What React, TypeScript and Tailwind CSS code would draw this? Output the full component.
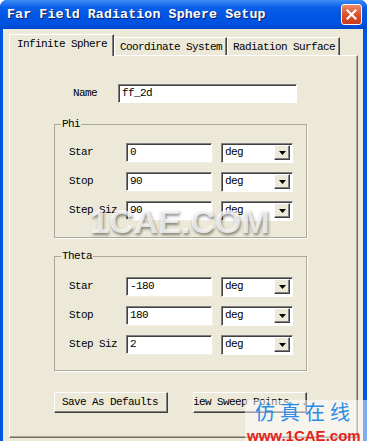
import React from "react";

type RowProps = {
  label: string;
  value: string;
};

function Field({ label, value }: RowProps) {
  return (
    <div className="flex items-center h-[19px] pl-[14px]">
      <span className="w-[57px] shrink-0">{label}</span>
      <div className="w-[86px] h-[19px] bg-white border border-t-[#808080] border-l-[#808080] border-r-white border-b-white shadow-[inset_1px_1px_0_#404040,1px_1px_0_#F1EFE2] flex items-center pl-[3px] text-black">
        {value}
      </div>
      <div className="ml-[9px] w-[72px] h-[20px] bg-white border border-t-[#808080] border-l-[#808080] border-r-white border-b-white shadow-[inset_1px_1px_0_#404040] flex items-center justify-between pl-[3px] pr-[2px]">
        <span>deg</span>
        <span className="w-[16px] h-[15px] bg-[#ECE9D8] border border-t-white border-l-white border-r-[#404040] border-b-[#404040] shadow-[inset_-1px_-1px_0_#808080] flex items-center justify-center">
          <svg width="7" height="4" viewBox="0 0 7 4">
            <path d="M0 0h7L3.5 4z" fill="#000" />
          </svg>
        </span>
      </div>
    </div>
  );
}

type GroupProps = {
  title: string;
  rows: RowProps[];
  className: string;
};

function Group({ title, rows, className }: GroupProps) {
  return (
    <fieldset
      className={`ml-[44px] w-[253px] border border-[#ACA899] shadow-[1px_1px_0_#fff] ${className}`}
    >
      <legend className="ml-[6px] px-[1px] leading-[12px]">{title}</legend>
      <div className="flex flex-col gap-[10px]">
        {rows.map((r) => (
          <Field key={r.label} label={r.label} value={r.value} />
        ))}
      </div>
    </fieldset>
  );
}

function Button({ children }: { children: React.ReactNode }) {
  return (
    <div className="w-[114px] h-[21px] overflow-hidden bg-[#ECE9D8] border border-t-white border-l-white border-r-[#404040] border-b-[#404040] shadow-[inset_-1px_-1px_0_#808080] flex items-center px-[7px] whitespace-nowrap">
      {children}
    </div>
  );
}

export default function App() {
  return (
    <div className="w-[367px] h-[441px] overflow-hidden relative bg-white font-['Liberation_Mono',monospace] text-[11px] tracking-[-0.6px] text-black">
      <div className="flex flex-col h-full rounded-t-[7px] overflow-hidden bg-[#0055E5]">
        <div className="h-[29px] shrink-0 flex items-center justify-between pl-[7px] pr-[5px] bg-[linear-gradient(to_bottom,#3D8FF5_0%,#2A7BF0_10%,#0A5FE8_25%,#0055E5_55%,#0052DF_85%,#0045CC_100%)]">
          <span className="font-['Liberation_Mono',monospace] font-bold text-[13.3px] tracking-[0.1px] text-white [text-shadow:1px_1px_0_#0A1E6A]">
            Far Field Radiation Sphere Setup
          </span>
          <div className="w-[21px] h-[21px] rounded-[3px] border border-white bg-[linear-gradient(to_bottom,#EE8A6A,#E1542F_45%,#C8391B)] flex items-center justify-center">
            <svg width="11" height="11" viewBox="0 0 11 11">
              <path d="M1.5 1.5l8 8M9.5 1.5l-8 8" stroke="#fff" strokeWidth="2.2" strokeLinecap="square" />
            </svg>
          </div>
        </div>

        <div className="flex-1 flex flex-col ml-[3px] mr-[4px] bg-[#ECE9D8] pt-[5px] pl-[6px] pr-[5px] pb-[3px]">
          <div className="flex items-end h-[21px] shrink-0">
            <div className="relative z-10 w-[105px] h-[22px] -mb-[1px] bg-[#ECE9D8] border border-b-0 border-t-white border-l-white border-r-[#404040] shadow-[inset_-1px_0_0_#808080] pl-[7px] pt-[3px] leading-[12px]">
              Infinite Sphere
            </div>
            <div className="w-[113px] h-[18px] border border-b-0 border-t-white border-l-white border-r-[#404040] shadow-[inset_-1px_0_0_#808080] pl-[5px] pt-[3px] leading-[12px]">
              Coordinate System
            </div>
            <div className="w-[113px] h-[18px] border border-b-0 border-t-white border-l-white border-r-[#404040] shadow-[inset_-1px_0_0_#808080] pl-[5px] pt-[3px] leading-[12px]">
              Radiation Surface
            </div>
          </div>

          <div className="flex-1 flex flex-col border border-t-white border-l-white border-r-[#716F64] border-b-[#716F64] shadow-[inset_-1px_-1px_0_#ACA899]">
            <div className="flex items-center h-[19px] mt-[28px] pl-[63px]">
              <span className="w-[45px]">Name</span>
              <div className="w-[179px] h-[19px] bg-white border border-t-[#808080] border-l-[#808080] border-r-white border-b-white shadow-[inset_1px_1px_0_#404040] flex items-center pl-[3px]">
                ff_2d
              </div>
            </div>

            <Group
              title="Phi"
              className="mt-[15px] pt-[13px] pb-[17px]"
              rows={[
                { label: "Star", value: "0" },
                { label: "Stop", value: "90" },
                { label: "Step Siz", value: "90" },
              ]}
            />

            <Group
              title="Theta"
              className="mt-[12px] pt-[15px] pb-[16px]"
              rows={[
                { label: "Star", value: "-180" },
                { label: "Stop", value: "180" },
                { label: "Step Siz", value: "2" },
              ]}
            />

            <div className="flex gap-[25px] ml-[44px] mt-[21px]">
              <Button>Save As Defaults</Button>
              <Button>
                <span className="-ml-[14px]">View Sweep Points...</span>
              </Button>
            </div>
          </div>
        </div>
      </div>

      {/* watermark */}
      <div className="absolute left-[90px] top-[204px] font-['Liberation_Sans',sans-serif] font-bold text-[34px] leading-none tracking-normal text-white/75 [text-shadow:1px_2px_3px_rgba(0,0,0,0.45)]">
        1CAE.COM
      </div>
      <div className="absolute left-[245px] top-[400px] right-0 bottom-0 bg-white/50" />
      <div className="absolute left-[255px] top-[402px] font-['Noto_Sans_CJK_SC',sans-serif] text-[20px] leading-none tracking-[5px] text-[#2A8CE6]">
        仿真在线
      </div>
      <div className="absolute left-[247px] top-[428px] font-['Liberation_Sans',sans-serif] font-bold text-[15px] leading-none tracking-normal text-[#E3241B]">
        www.1CAE.com
      </div>
    </div>
  );
}
